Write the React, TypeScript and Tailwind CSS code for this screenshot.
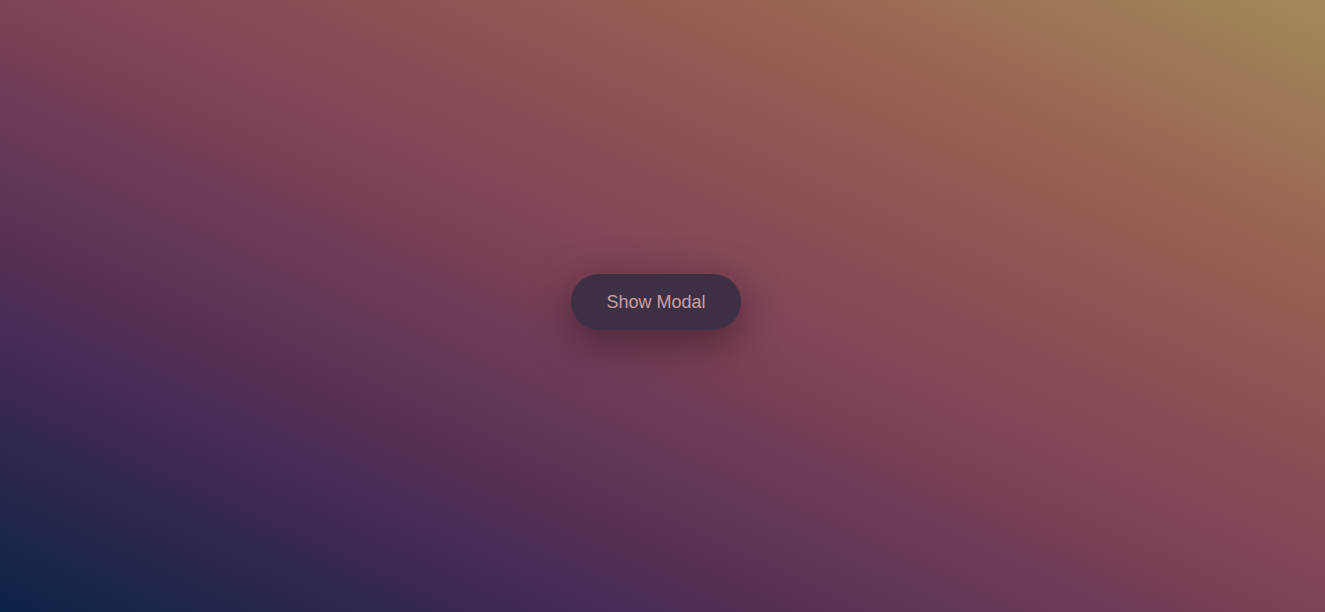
import React from 'react';

export default function App() {
  return (
    <div className="w-full h-screen overflow-hidden flex items-center justify-center pr-[13px] pb-[8px] bg-[linear-gradient(to_top_right,#0b2347_0%,#4a2b55_24%,#7e4257_50%,#985e51_76%,#a38a5a_100%)]">
      <button
        className="w-[170px] h-[56px] rounded-full bg-[#3d2f44] text-[#c9a0a8] text-[18px] shadow-[0_12px_40px_rgba(30,10,25,0.5)] cursor-pointer"
        style={{ fontFamily: '"Liberation Sans", Arial, sans-serif' }}
      >
        Show Modal
      </button>
    </div>
  );
}
